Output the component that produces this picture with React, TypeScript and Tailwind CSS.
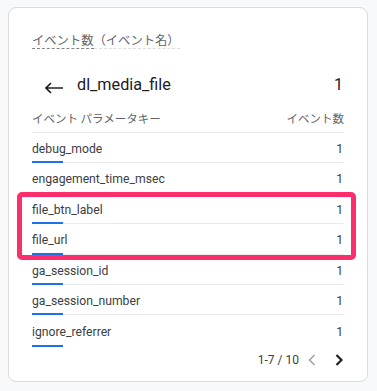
import React from "react";

const rows = [
  "debug_mode",
  "engagement_time_msec",
  "file_btn_label",
  "file_url",
  "ga_session_id",
  "ga_session_number",
  "ignore_referrer",
];

const latin = { fontFamily: "Roboto, 'Noto Sans CJK JP', sans-serif" };
const cjk = { fontFamily: "'Noto Sans CJK JP', Roboto, sans-serif" };

export default function App() {
  return (
    <div className="relative h-[391px] w-[377px] bg-[#f8f9fa] pl-[8px] pt-[7px]">
      <div className="flex h-[375px] w-[360px] flex-col rounded-lg border border-[#dadce0] bg-white px-[23px] pt-[20px]">
        <div className="flex h-[24px] items-center text-[12.3px] text-[#5f6368]" style={cjk}>
          <span className="border-b border-dashed border-[#80868b] leading-[16px]">イベント数</span>
          <span className="border-b border-dashed border-[#dadce0] leading-[16px]">（イベント名）</span>
        </div>
        <div className="mt-[19px] flex h-[28px] items-center">
          <svg width="19" height="12" viewBox="0 0 19 12" className="ml-[13px] mt-[5px]">
            <path d="M1 6 H18 M6 1 L1 6 L6 11" stroke="#202124" strokeWidth="1.7" fill="none" />
          </svg>
          <span className="ml-[13px] text-[16.2px] text-[#202124]" style={latin}>dl_media_file</span>
          <span className="ml-auto mr-[1px] text-[16px] text-[#202124]" style={latin}>1</span>
        </div>
        <div className="mt-[7px] flex h-[26px] items-center text-[11.5px] text-[#5f6368]" style={cjk}>
          <span>イベント パラメータキー</span>
          <span className="ml-auto">イベント数</span>
        </div>
        <div className="border-b border-[#e8eaed]" />
        {rows.map((r, i) => (
          <div
            key={r}
            className={`relative flex h-[30.4px] items-center pt-[3px] text-[12.2px] text-[#3c4043] ${i < rows.length - 1 ? "border-b border-[#e8eaed]" : ""}`}
            style={latin}
          >
            <span>{r}</span>
            <span className="ml-auto mr-[1px]">1</span>
            <div className="absolute bottom-[-1px] left-0 h-[2px] w-[31px] bg-[#1a73e8]" />
          </div>
        ))}
        <div className="mt-[2px] flex h-[24px] items-center justify-end text-[12px] text-[#3c4043]" style={latin}>
          <span>1-7 / 10</span>
          <svg width="8" height="12" viewBox="0 0 8 12" className="ml-[9px]">
            <path d="M6.5 1 L1.5 6 L6.5 11" stroke="#9aa0a6" strokeWidth="1.5" fill="none" />
          </svg>
          <svg width="8" height="12" viewBox="0 0 8 12" className="ml-[19px] mr-[1px]">
            <path d="M1.5 1 L6.5 6 L1.5 11" stroke="#202124" strokeWidth="2.2" fill="none" />
          </svg>
        </div>
      </div>
      <div className="pointer-events-none absolute left-[17px] top-[192px] h-[68px] w-[339px] rounded-[5px] border-[5px] border-[#fd2e6c]" />
    </div>
  );
}
